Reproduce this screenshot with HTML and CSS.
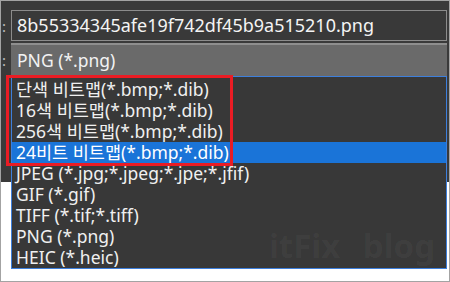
FILE: index.html
```html
<!DOCTYPE html>
<html lang="ko">
<head>
    <meta charset="UTF-8">
    <title>Save As - file type</title>
    <link rel="stylesheet" href="styles.css">
</head>
<body>
    <div class="screen">
        <!-- dialog fields -->
        <div class="dialog">
            <div class="row">
                <span class="label">:</span>
                <div class="field">8b55334345afe19f742df45b9a515210.png</div>
            </div>
            <div class="row">
                <span class="label">:</span>
                <div class="combo">PNG (*.png)</div>
            </div>
        </div>

        <!-- open dropdown -->
        <ul class="type-list">
            <li>단색 비트맵(*.bmp;*.dib)</li>
            <li>16색 비트맵(*.bmp;*.dib)</li>
            <li>256색 비트맵(*.bmp;*.dib)</li>
            <li class="selected">24비트 비트맵(*.bmp;*.dib)</li>
            <li>JPEG (*.jpg;*.jpeg;*.jpe;*.jfif)</li>
            <li>GIF (*.gif)</li>
            <li>TIFF (*.tif;*.tiff)</li>
            <li>PNG (*.png)</li>
            <li>HEIC (*.heic)</li>
        </ul>

        <div class="callout"></div>
        <div class="watermark">itFix blog</div>
    </div>
</body>
</html>
```

FILE: styles.css
```css
/* Page */
body {
    margin: 0;
    font-family: "Noto Sans", "Noto Sans CJK KR", sans-serif;
}

.screen {
    position: relative;
    width: 450px;
    height: 282px;
    box-sizing: border-box;
    border: 1px solid #a3a3a3;
    background-color: white;
    overflow: hidden;
}

/* Dark dialog area */
.dialog {
    height: 172px;
    padding: 9px 2px 0 0;
    background-color: #3a3a3a;
    display: flex;
    flex-direction: column;
    gap: 2px;
}

.row {
    display: flex;
    align-items: center;
}

.label {
    width: 10px;
    padding-left: 1px;
    box-sizing: border-box;
    color: #bdbdbd;
    font-size: 15px;
}

.field {
    flex: 1;
    height: 31px;
    box-sizing: border-box;
    border: 1px solid #8c8c8c;
    background-color: #393939;
    padding-left: 5px;
    color: #f4f4f4;
    font-size: 18px;
    line-height: 28px;
    white-space: nowrap;
}

.combo {
    flex: 1;
    height: 33px;
    box-sizing: border-box;
    border-top: 2px solid #8e8e8e;
    background-color: #6a6a6a;
    padding-left: 6px;
    color: #f2f2f2;
    font-size: 17.5px;
    line-height: 31px;
}

/* Dropdown list */
.type-list {
    position: absolute;
    left: 10px;
    top: 75px;
    width: 436px;
    height: 193px;
    box-sizing: border-box;
    margin: 0;
    padding: 2px 0 0 0;
    list-style: none;
    border: 1px solid #3d7fdc;
    background-color: #383838;
}

.type-list li {
    height: 21px;
    line-height: 21px;
    padding-left: 4px;
    color: #f0f0f0;
    font-size: 17.5px;
    white-space: nowrap;
}

.type-list li.selected {
    background-color: #1a74d8;
    color: white;
}

/* Red highlight box */
.callout {
    position: absolute;
    left: 5px;
    top: 74px;
    width: 227px;
    height: 91px;
    box-sizing: border-box;
    border: 3px solid #ea1c24;
}

.watermark {
    position: absolute;
    left: 268px;
    top: 222px;
    font-size: 33px;
    font-weight: bold;
    word-spacing: 14px;
    color: rgba(255, 255, 255, 0.045);
}
```
